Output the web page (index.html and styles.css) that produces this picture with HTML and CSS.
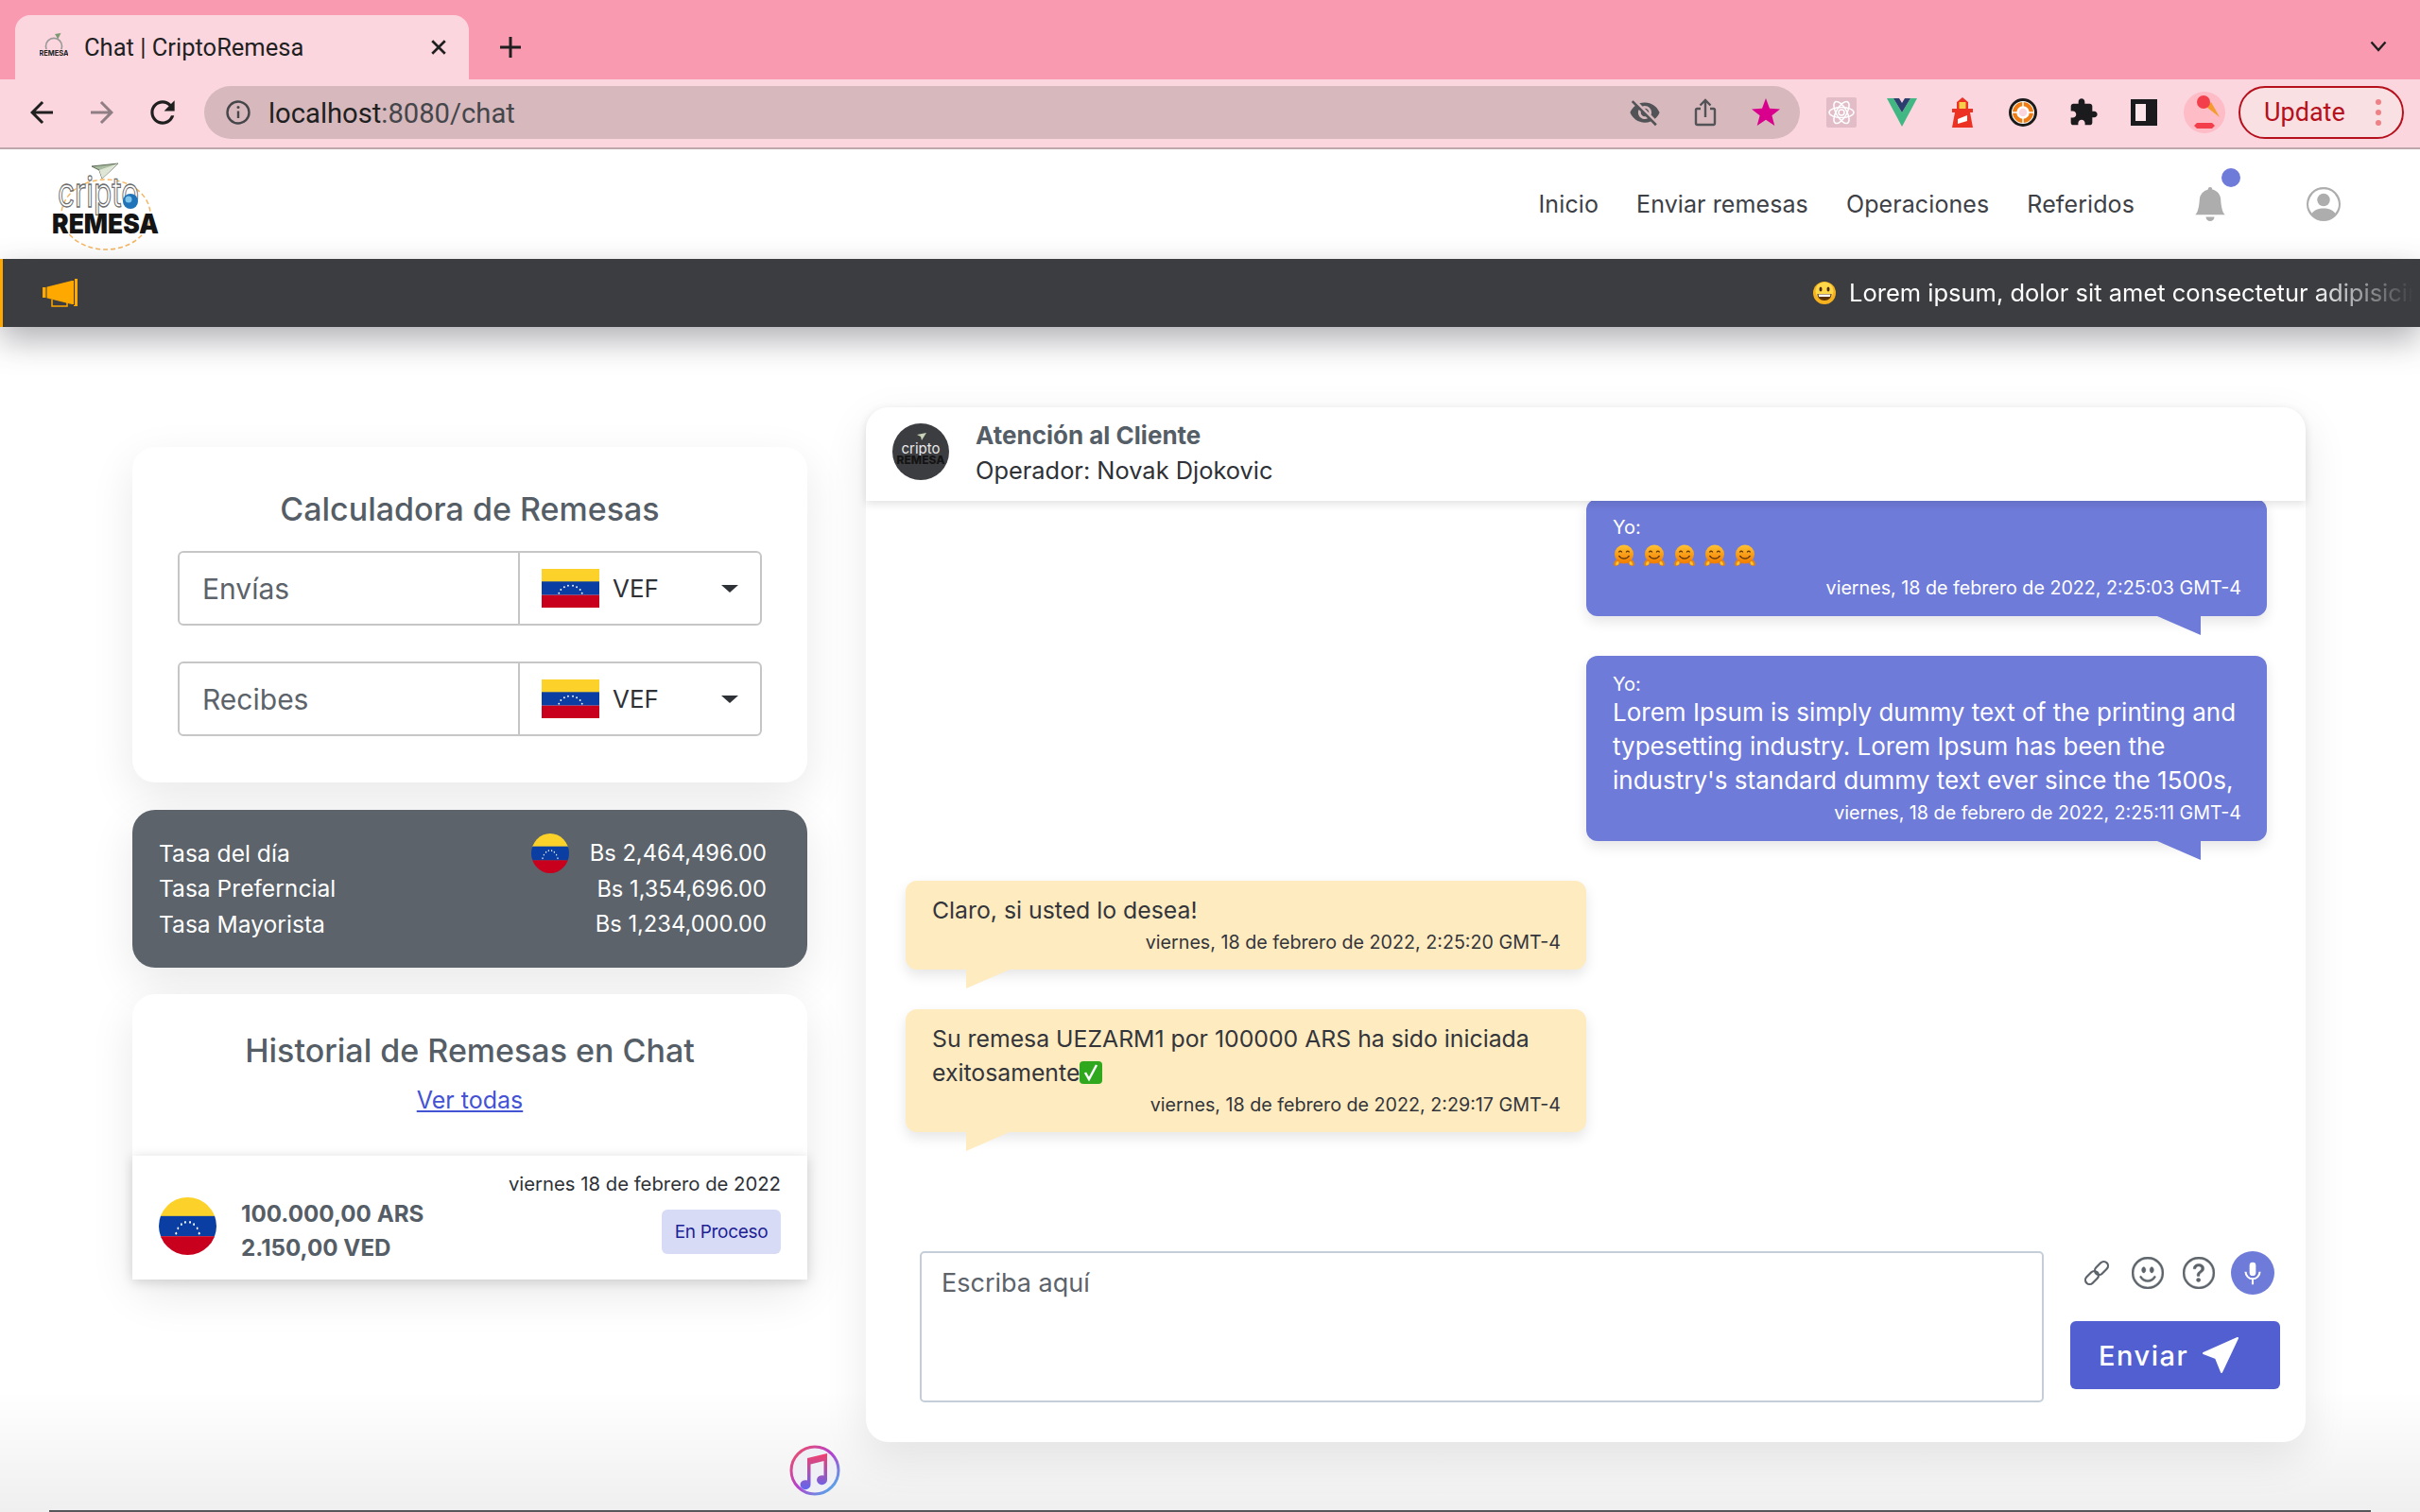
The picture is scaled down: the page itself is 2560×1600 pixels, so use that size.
FILE: index.html
```html
<!DOCTYPE html>
<html lang="es">
<head>
    <meta charset="UTF-8">
    <meta name="viewport" content="width=device-width, initial-scale=1.0">
    <title>Chat | CriptoRemesa</title>
    <link rel="stylesheet" href="styles.css">
</head>
<body>
    <!-- shared drawings -->
    <svg class="defs" width="0" height="0">
        <defs>
            <symbol id="flag-ve" viewBox="0 0 60 40" preserveAspectRatio="none">
                <rect width="60" height="14" fill="#fcd22a"/>
                <rect y="13" width="60" height="14" fill="#0a3ea3"/>
                <rect y="27" width="60" height="13" fill="#c8001e"/>
                <g fill="#fff">
                    <circle cx="18" cy="25" r=".9"/><circle cx="20" cy="21.5" r=".9"/><circle cx="23.5" cy="18.8" r=".9"/>
                    <circle cx="27.5" cy="17.3" r=".9"/><circle cx="32.5" cy="17.3" r=".9"/><circle cx="36.5" cy="18.8" r=".9"/>
                    <circle cx="40" cy="21.5" r=".9"/><circle cx="42" cy="25" r=".9"/>
                </g>
            </symbol>
            <linearGradient id="hug-face" x1="0" y1="0" x2="0" y2="1">
                <stop offset="0" stop-color="#ffc233"/>
                <stop offset="1" stop-color="#f27c00"/>
            </linearGradient>
            <symbol id="hug" viewBox="0 0 24 24">
                <circle cx="12" cy="10.500" r="10" fill="url(#hug-face)"/>
                <path d="M6.500 8.500c.5-1.800 2.700-1.800 3.200 0M14.300 8.500c.5-1.800 2.700-1.800 3.200 0" fill="none" stroke="#5c3208" stroke-width="1.300"/>
                <path d="M6.500 12c2.500 4.200 8.500 4.200 11 0" fill="none" stroke="#5c3208" stroke-width="1.400"/>
                <path d="M1 21c0-3 2.500-5 4.500-5s2.500 3 1.500 5-6 3-6 0zM23 21c0-3-2.500-5-4.500-5s-2.500 3-1.500 5 6 3 6 0z" fill="#e9820c"/>
                <path d="M3 21c0-1.500 1.200-3 2.500-3s1 2 .5 3-3 1.500-3 0zM21 21c0-1.500-1.200-3-2.500-3s-1 2-.5 3 3 1.500 3 0z" fill="#ffc233"/>
            </symbol>
        </defs>
    </svg>

    <!-- browser window top -->
    <div class="tabstrip">
        <div class="tab">
            <svg class="tab-icon" viewBox="0 0 28 28">
                <circle cx="14" cy="13" r="8" fill="none" stroke="#999" stroke-width="1.500"/>
                <path d="M15 1l6-1-3 6z" fill="#7c9a72"/>
                <rect x="1" y="16" width="26" height="7" fill="#fcd6df"/>
                <text class="tab-icon-text" x="14" y="22" text-anchor="middle">REMESA</text>
            </svg>
            <span class="tab-title">Chat | CriptoRemesa</span>
            <span class="tab-close">
                <svg viewBox="0 0 16 16" width="18" height="18"><path d="M2 2l12 12M14 2L2 14" stroke="#1f1f1f" stroke-width="2.400"/></svg>
            </span>
        </div>
        <svg class="tab-new" viewBox="0 0 24 24" width="24" height="24"><path d="M12 1v22M1 12h22" stroke="#1f1f1f" stroke-width="3"/></svg>
        <svg class="tab-list" viewBox="0 0 18 12" width="18" height="12"><path d="M1.500 1.500L9 10l7.500-8.500" fill="none" stroke="#1f1f1f" stroke-width="2.400"/></svg>
    </div>

    <div class="toolbar">
        <div class="tool"><svg viewBox="0 0 24 24" width="36" height="36"><path fill="#1f1f1f" d="M20 11H7.830l5.590-5.590L12 4l-8 8 8 8 1.410-1.410L7.830 13H20v-2z"/></svg></div>
        <div class="tool"><svg viewBox="0 0 24 24" width="36" height="36"><path fill="#8f7f85" d="M4 11h12.170l-5.590-5.590L12 4l8 8-8 8-1.410-1.410L16.170 13H4v-2z"/></svg></div>
        <div class="tool"><svg viewBox="0 0 24 24" width="38" height="38"><path fill="#1f1f1f" d="M17.650 6.350C16.200 4.900 14.210 4 12 4c-4.420 0-7.990 3.580-7.990 8s3.570 8 7.990 8c3.730 0 6.840-2.550 7.730-6h-2.080c-.82 2.330-3.040 4-5.650 4-3.310 0-6-2.690-6-6s2.690-6 6-6c1.660 0 3.140.69 4.220 1.780L13 11h7V4l-2.350 2.350z"/></svg></div>

        <div class="omnibox">
            <svg class="omni-info" viewBox="0 0 28 28" width="28" height="28">
                <circle cx="14" cy="14" r="11.500" fill="none" stroke="#45464a" stroke-width="2.400"/>
                <path d="M14 12.500v7.500" stroke="#45464a" stroke-width="2.400"/>
                <circle cx="14" cy="8.500" r="1.500" fill="#45464a"/>
            </svg>
            <span class="omni-url"><span class="omni-host">localhost</span>:8080/chat</span>
            <div class="omni-actions">
                <div class="tool"><svg viewBox="0 0 24 24" width="34" height="34"><path fill="#515356" d="M12 7c2.760 0 5 2.240 5 5 0 .65-.13 1.260-.36 1.830l2.920 2.920c1.510-1.260 2.700-2.890 3.430-4.750-1.730-4.390-6-7.500-11-7.500-1.400 0-2.740.25-3.980.7l2.160 2.160C10.740 7.130 11.350 7 12 7zM2 4.270l2.280 2.280.46.46C3.080 8.300 1.780 10.020 1 12c1.730 4.390 6 7.500 11 7.500 1.550 0 3.030-.3 4.380-.84l.42.42L19.730 22 21 20.730 3.270 3 2 4.270zM7.530 9.800l1.550 1.550c-.05.21-.08.43-.08.65 0 1.660 1.340 3 3 3 .22 0 .44-.03.65-.08l1.550 1.550c-.67.33-1.410.53-2.200.53-2.760 0-5-2.240-5-5 0-.79.2-1.530.53-2.200zm4.310-.78l3.150 3.150.02-.16c0-1.660-1.340-3-3-3l-.17.01z"/></svg></div>
                <div class="tool"><svg viewBox="0 0 24 30" width="24" height="30"><path d="M7 11H3.500A1.500 1.500 0 0 0 2 12.500v14A1.500 1.500 0 0 0 3.500 28h17a1.500 1.500 0 0 0 1.500-1.500v-14a1.500 1.500 0 0 0-1.500-1.500H17M12 20V2M6.500 7.500L12 2l5.500 5.500" fill="none" stroke="#515356" stroke-width="2.400"/></svg></div>
                <div class="tool tool-star"><svg viewBox="0 0 30 30" width="30" height="30"><path fill="#d8008c" d="M15 0l4 10.800 11 .6-8.600 6.900 2.900 10.700L15 22.800 5.700 29l2.900-10.700L0 11.400l11-.6z"/></svg></div>
            </div>
        </div>

        <div class="extensions">
            <div class="tool">
                <div class="ext-react">
                    <svg viewBox="0 0 32 32" width="32" height="32" fill="none" stroke="#fff" stroke-width="1.500">
                        <ellipse cx="16" cy="16" rx="13" ry="5.500"/>
                        <ellipse cx="16" cy="16" rx="13" ry="5.500" transform="rotate(60 16 16)"/>
                        <ellipse cx="16" cy="16" rx="13" ry="5.500" transform="rotate(120 16 16)"/>
                        <circle cx="16" cy="16" r="3"/>
                    </svg>
                </div>
            </div>
            <div class="tool"><svg viewBox="0 0 32 30" width="32" height="30"><path fill="#41b883" d="M0 0h7l9 15 9-15h7L16 30z"/><path fill="#2c3e6e" d="M7 0h6l3 5 3-5h6l-9 15z"/></svg></div>
            <div class="tool">
                <svg viewBox="0 0 22 32" width="22" height="32">
                    <path fill="#ec3323" d="M11 0l6 5v7H5V5zM0 12h22v4h-3l3 16H0l3-16H0z"/>
                    <rect x="7.500" y="5" width="7" height="7" fill="#f7d04a"/>
                    <path fill="#fff" d="M6 23l10-4v6l-10 3z"/>
                </svg>
            </div>
            <div class="tool">
                <svg viewBox="0 0 30 30" width="30" height="30">
                    <circle cx="15" cy="15" r="13.500" fill="#fff" stroke="#1a1a1a" stroke-width="3"/>
                    <circle cx="15" cy="15" r="11" fill="#ef7d14"/>
                    <circle cx="15" cy="15" r="5.500" fill="#fcd6df" stroke="#fff" stroke-width="2.500"/>
                    <path d="M15 4v6M15 20v6M4 15h6M20 15h6" stroke="#fff" stroke-width="1.500"/>
                </svg>
            </div>
            <div class="tool"><svg viewBox="0 0 24 24" width="32" height="32"><path fill="#1b1b1d" d="M20.500 11H19V7c0-1.100-.9-2-2-2h-4V3.500C13 2.120 11.880 1 10.500 1S8 2.120 8 3.500V5H4c-1.100 0-1.990.9-1.990 2v3.800H3.500c1.490 0 2.700 1.210 2.700 2.700s-1.210 2.700-2.700 2.700H2V20c0 1.100.9 2 2 2h3.800v-1.500c0-1.490 1.210-2.700 2.700-2.700 1.490 0 2.700 1.210 2.700 2.700V22H17c1.100 0 2-.9 2-2v-4h1.500c1.380 0 2.500-1.120 2.500-2.500S21.880 11 20.500 11z"/></svg></div>
            <div class="tool"><span class="ext-sidebar"></span></div>
            <div class="tool">
                <svg viewBox="0 0 44 44" width="44" height="44">
                    <circle cx="22" cy="22" r="22" fill="#fdbcc6"/>
                    <path d="M24 16l14 11-9-16z" fill="#f59b2e"/>
                    <circle cx="21" cy="11" r="7" fill="#f23f4b"/>
                    <path d="M14 33h16l3 3-3 3H14l-3-3z" fill="#f23f4b"/>
                </svg>
            </div>
        </div>

        <div class="update-btn">
            <span>Update</span>
            <span class="update-dots"><i></i><i></i><i></i></span>
        </div>
    </div>

    <!-- site navbar -->
    <header class="navbar">
        <svg class="logo" viewBox="0 0 160 110" width="160" height="110">
            <ellipse cx="82" cy="66" rx="47" ry="37" fill="none" stroke="#f5b560" stroke-width="1.500" stroke-dasharray="5 3"/>
            <path d="M67 15l28-3-17 16-3-9z" fill="#a9bb9f" stroke="#5d6b58" stroke-width="1"/>
            <path d="M75 19l20-7-17 16z" fill="#dfe6d6"/>
            <text class="logo-top" x="31" y="58" textLength="86" lengthAdjust="spacingAndGlyphs">cripto</text>
            <circle cx="108" cy="52" r="8" fill="#1f73b8"/>
            <circle cx="106" cy="50" r="3.500" fill="#7fc4ea"/>
            <text class="logo-bottom" x="25" y="86" textLength="113" lengthAdjust="spacingAndGlyphs">REMESA</text>
        </svg>
        <nav class="nav-links">
            <a class="nav-link">Inicio</a>
            <a class="nav-link">Enviar remesas</a>
            <a class="nav-link">Operaciones</a>
            <a class="nav-link">Referidos</a>
        </nav>
        <div class="nav-bell">
            <svg viewBox="0 0 16 16" width="36" height="36"><path fill="#adadad" d="M8 16a2 2 0 0 0 2-2H6a2 2 0 0 0 2 2zm.995-14.901a1 1 0 1 0-1.990 0A5.002 5.002 0 0 0 3 6c0 1.098-.5 6-2 7h14c-1.500-1-2-5.902-2-7 0-2.420-1.720-4.440-4.005-4.901z"/></svg>
            <span class="nav-dot"></span>
        </div>
        <svg class="nav-user" viewBox="0 0 16 16" width="36" height="36">
            <path fill="#adadad" d="M11 6a3 3 0 1 1-6 0 3 3 0 0 1 6 0z"/>
            <path fill="#adadad" d="M0 8a8 8 0 1 1 16 0A8 8 0 0 1 0 8zm8-7a7 7 0 0 0-5.468 11.370C3.242 11.226 4.805 10 8 10s4.757 1.225 5.468 2.370A7 7 0 0 0 8 1z"/>
        </svg>
    </header>

    <!-- announcement bar -->
    <div class="notice">
        <svg class="notice-icon" viewBox="0 0 38 30" width="38" height="30">
            <path fill="#ffa800" d="M0 9h3l28-7h2v-2h4v29h-4v-2h-2L3 20H0z"/>
            <path fill="none" stroke="#3c3d41" stroke-width="1" d="M4 8v13M33.500 0v28"/>
            <path fill="none" stroke="#ffa800" stroke-width="1.500" d="M10 22v7h16v-4"/>
        </svg>
        <div class="notice-text">
            <svg class="notice-emoji" viewBox="0 0 24 24" width="24" height="24">
                <circle cx="12" cy="12" r="12" fill="#f5b21e"/>
                <circle cx="12" cy="10" r="9.500" fill="#ffd84a"/>
                <ellipse cx="8" cy="8" rx="1.500" ry="2.500" fill="#4a2a05"/>
                <ellipse cx="16" cy="8" rx="1.500" ry="2.500" fill="#4a2a05"/>
                <path d="M4.500 13h15c0 4-3 7-7.500 7s-7.500-3-7.500-7z" fill="#5c3208"/>
                <path d="M5.500 13.500h13l-.6 2.500H6.100z" fill="#fff"/>
            </svg>
            <span class="notice-copy">Lorem ipsum, dolor sit amet consectetur adipisicing elit</span>
        </div>
    </div>

    <main class="page">
        <section class="left-col">
            <div class="card calc-card">
                <h2 class="card-title">Calculadora de Remesas</h2>
                <div class="field">
                    <span class="field-input">Envías</span>
                    <div class="field-select">
                        <svg class="flag-rect"><use href="#flag-ve"/></svg>
                        <span>VEF</span>
                        <i class="caret"></i>
                    </div>
                </div>
                <div class="field">
                    <span class="field-input">Recibes</span>
                    <div class="field-select">
                        <svg class="flag-rect"><use href="#flag-ve"/></svg>
                        <span>VEF</span>
                        <i class="caret"></i>
                    </div>
                </div>
            </div>

            <div class="card rates-card">
                <div class="rate-row">
                    <span>Tasa del día</span>
                    <span class="rate-value"><svg class="flag-small"><use href="#flag-ve"/></svg>Bs 2,464,496.00</span>
                </div>
                <div class="rate-row">
                    <span>Tasa Preferncial</span>
                    <span class="rate-value">Bs 1,354,696.00</span>
                </div>
                <div class="rate-row">
                    <span>Tasa Mayorista</span>
                    <span class="rate-value">Bs 1,234,000.00</span>
                </div>
            </div>

            <div class="card history-card">
                <div class="history-head">
                    <h2 class="card-title">Historial de Remesas en Chat</h2>
                    <a class="history-link">Ver todas</a>
                </div>
                <div class="history-item">
                    <svg class="flag-big"><use href="#flag-ve"/></svg>
                    <div class="history-amounts">
                        <div>100.000,00 ARS</div>
                        <div>2.150,00 VED</div>
                    </div>
                    <div class="history-meta">
                        <div class="history-date">viernes 18 de febrero de 2022</div>
                        <span class="badge">En Proceso</span>
                    </div>
                </div>
            </div>
        </section>

        <section class="card chat-card">
            <div class="chat-head">
                <svg class="chat-avatar" viewBox="0 0 60 60" width="60" height="60">
                    <circle cx="30" cy="30" r="30" fill="#3c3d41"/>
                    <path d="M26 12l10-2-5 8-1-4z" fill="#c9d3b8"/>
                    <text class="avatar-top" x="30" y="32" text-anchor="middle">cripto</text>
                    <text class="avatar-bottom" x="30" y="43" text-anchor="middle">REMESA</text>
                </svg>
                <div class="chat-names">
                    <div class="chat-title">Atención al Cliente</div>
                    <div class="chat-sub">Operador: Novak Djokovic</div>
                </div>
            </div>

            <div class="messages">
                <div class="bubble bubble-me">
                    <div class="bubble-who">Yo:</div>
                    <div class="emoji-row">
                        <svg class="hug"><use href="#hug"/></svg>
                        <svg class="hug"><use href="#hug"/></svg>
                        <svg class="hug"><use href="#hug"/></svg>
                        <svg class="hug"><use href="#hug"/></svg>
                        <svg class="hug"><use href="#hug"/></svg>
                    </div>
                    <div class="bubble-time">viernes, 18 de febrero de 2022, 2:25:03 GMT-4</div>
                </div>
                <div class="bubble bubble-me">
                    <div class="bubble-who">Yo:</div>
                    <div class="bubble-text">Lorem Ipsum is simply dummy text of the printing and typesetting industry. Lorem Ipsum has been the industry's standard dummy text ever since the 1500s,</div>
                    <div class="bubble-time">viernes, 18 de febrero de 2022, 2:25:11 GMT-4</div>
                </div>
                <div class="bubble bubble-them">
                    <div class="bubble-text">Claro, si usted lo desea!</div>
                    <div class="bubble-time">viernes, 18 de febrero de 2022, 2:25:20 GMT-4</div>
                </div>
                <div class="bubble bubble-them">
                    <div class="bubble-text">Su remesa UEZARM1 por 100000 ARS ha sido iniciada exitosamente<svg class="check" viewBox="0 0 24 24" width="24" height="24"><rect width="24" height="24" rx="4" fill="#2fa81e"/><path d="M6 12l4 7 8-15" fill="none" stroke="#fff" stroke-width="2.500"/></svg></div>
                    <div class="bubble-time">viernes, 18 de febrero de 2022, 2:29:17 GMT-4</div>
                </div>
            </div>

            <div class="composer">
                <div class="composer-input">Escriba aquí</div>
                <div class="composer-side">
                    <div class="composer-icons">
                        <svg viewBox="0 0 34 34" width="34" height="34" fill="none" stroke="#5c636a" stroke-width="2.200">
                            <rect x="4" y="17.500" width="16" height="9" rx="4.500" transform="rotate(-45 12 22)"/>
                            <rect x="14" y="7.500" width="16" height="9" rx="4.500" transform="rotate(-45 22 12)"/>
                        </svg>
                        <svg class="icon-thick" viewBox="0 0 16 16" width="34" height="34">
                            <path d="M8 15A7 7 0 1 1 8 1a7 7 0 0 1 0 14zm0 1A8 8 0 1 0 8 0a8 8 0 0 0 0 16z"/>
                            <path d="M4.285 9.567a.5.5 0 0 1 .683.183A3.498 3.498 0 0 0 8 11.500a3.498 3.498 0 0 0 3.032-1.750.5.5 0 1 1 .866.5A4.498 4.498 0 0 1 8 12.500a4.498 4.498 0 0 1-3.898-2.250.5.5 0 0 1 .183-.683zM7 6.500C7 7.328 6.552 8 6 8s-1-.672-1-1.500S5.448 5 6 5s1 .672 1 1.500zm4 0c0 .828-.448 1.500-1 1.500s-1-.672-1-1.500S9.448 5 10 5s1 .672 1 1.500z"/>
                        </svg>
                        <svg class="icon-thick" viewBox="0 0 16 16" width="34" height="34">
                            <path d="M8 15A7 7 0 1 1 8 1a7 7 0 0 1 0 14zm0 1A8 8 0 1 0 8 0a8 8 0 0 0 0 16z"/>
                            <path d="M5.255 5.786a.237.237 0 0 0 .241.247h.825c.138 0 .248-.113.266-.25.09-.656.54-1.134 1.342-1.134.686 0 1.314.343 1.314 1.168 0 .635-.374.927-.965 1.371-.673.489-1.206 1.060-1.168 1.987l.003.217a.25.25 0 0 0 .25.246h.811a.25.25 0 0 0 .25-.25v-.105c0-.718.273-.927 1.010-1.486.609-.463 1.244-.977 1.244-2.056 0-1.511-1.276-2.241-2.673-2.241-1.267 0-2.655.59-2.750 2.286zm1.557 5.763c0 .533.425.927 1.010.927.609 0 1.028-.394 1.028-.927 0-.552-.42-.94-1.029-.94-.584 0-1.009.388-1.009.94z"/>
                        </svg>
                        <span class="mic">
                            <svg viewBox="0 0 24 30" width="20" height="25" fill="none" stroke="#fff" stroke-width="2.500">
                                <rect x="8" y="1" width="8" height="17" rx="4" fill="#fff" stroke="none"/>
                                <path d="M3 13a9 9 0 0 0 18 0M12 22v7"/>
                            </svg>
                        </span>
                    </div>
                    <button class="send-btn">
                        <span>Enviar</span>
                        <svg viewBox="0 0 40 40" width="40" height="40"><path d="M38 2L2 18l13 5 6 15z" fill="#fff" stroke="#fff" stroke-width="2" stroke-linejoin="round"/></svg>
                    </button>
                </div>
            </div>
        </section>

        <svg class="music-icon" viewBox="0 0 54 54" width="54" height="54">
            <defs>
                <linearGradient id="ring" x1="0" y1="0" x2="1" y2="1">
                    <stop offset="0" stop-color="#f4525a"/>
                    <stop offset=".5" stop-color="#b43fd0"/>
                    <stop offset="1" stop-color="#3bc3f0"/>
                </linearGradient>
                <linearGradient id="note" x1="0" y1="0" x2="0" y2="1">
                    <stop offset="0" stop-color="#f43f6a"/>
                    <stop offset="1" stop-color="#5f66f2"/>
                </linearGradient>
            </defs>
            <circle cx="27" cy="27" r="25" fill="#eff0f6" stroke="url(#ring)" stroke-width="3"/>
            <path fill="url(#note)" d="M19 14l21-5v28a5.500 5 0 1 1-3.500-4.500V17l-14 3.500V42a5.500 5 0 1 1-3.500-4.500z"/>
        </svg>
    </main>

    <div class="window-edge"></div>
</body>
</html>
```
FILE: styles.css
```css
/* Basic reset */
* {
    box-sizing: border-box;
    margin: 0;
    padding: 0;
}

body {
    display: flex;
    flex-direction: column;
    height: 1600px;
    overflow: hidden;
    background: linear-gradient(to bottom, #ffffff 92%, #efefef 100%);
    font-family: Inter, "Liberation Sans", sans-serif;
    color: #2e3136;
}

.defs {
    position: absolute;
}

/* Browser tabs */
.tabstrip {
    display: flex;
    align-items: flex-end;
    height: 84px;
    padding-left: 16px;
    background-color: #f99ab1;
}

.tab {
    display: flex;
    align-items: center;
    width: 480px;
    height: 68px;
    padding: 0 23px 0 26px;
    border-radius: 16px 16px 0 0;
    background-color: #fcd6df;
}

.tab-icon {
    width: 30px;
    height: 30px;
    margin-right: 17px;
}

.tab-icon-text {
    font-size: 7px;
    font-weight: 700;
    fill: #222;
}

.tab-title {
    flex: 1;
    font-family: Roboto, sans-serif;
    font-size: 25.500px;
    color: #1f1f1f;
}

.tab-close {
    display: flex;
}

.tab-new {
    margin: 0 0 22px 32px;
}

.tab-list {
    margin: 0 35px 29px auto;
}

/* Browser toolbar */
.toolbar {
    display: flex;
    align-items: center;
    height: 74px;
    padding: 0 17px 2px 12px;
    border-bottom: 2px solid #bda6ac;
    background-color: #fcd6df;
}

.tool {
    display: flex;
    align-items: center;
    justify-content: center;
    width: 64px;
    height: 56px;
    flex-shrink: 0;
}

.omnibox {
    display: flex;
    align-items: center;
    width: 1688px;
    height: 56px;
    margin-left: 12px;
    padding-left: 22px;
    border-radius: 28px;
    background-color: #d6b8bd;
}

.omni-url {
    margin: 1px 0 0 18px;
    font-family: Roboto, sans-serif;
    font-size: 29.200px;
    color: #45464a;
}

.omni-host {
    color: #1f1f1f;
}

.omni-actions {
    display: flex;
    margin-left: auto;
}

.tool-star {
    width: 52px;
    margin: 0 10px 0 6px;
}

.extensions {
    display: flex;
    margin-left: 12px;
}

.ext-react {
    display: flex;
    width: 32px;
    height: 32px;
    border-radius: 2px;
    background-color: #e2bcc7;
}

.ext-sidebar {
    width: 28px;
    height: 28px;
    border: 5px solid #1b1b1d;
    border-right-width: 12px;
    background-color: #fce6ea;
}

.update-btn {
    display: flex;
    align-items: center;
    justify-content: space-between;
    width: 175px;
    height: 56px;
    margin-left: 4px;
    padding: 0 22px 0 25px;
    border: 2px solid #b5101c;
    border-radius: 28px;
    background-color: #f9e1e3;
    font-family: Roboto, sans-serif;
    font-size: 27px;
    color: #b5101c;
}

.update-dots {
    display: flex;
    flex-direction: column;
    gap: 5px;
}

.update-dots i {
    display: block;
    width: 6px;
    height: 6px;
    border-radius: 50%;
    background-color: #ee8086;
}

/* Site navbar */
.navbar {
    display: flex;
    align-items: center;
    height: 116px;
    padding: 0 84px 0 30px;
    background-color: #ffffff;
}

.logo {
    display: block;
}

.logo-top {
    font-size: 44px;
    fill: #ffffff;
    stroke: #6b6b6b;
    stroke-width: 1.300;
}

.logo-bottom {
    font-size: 29px;
    font-weight: 900;
    fill: #141414;
}

.nav-links {
    display: flex;
    gap: 40px;
    margin-left: auto;
}

.nav-link {
    font-size: 25px;
    letter-spacing: 0.100px;
    color: #3d4146;
}

.nav-bell {
    position: relative;
    display: flex;
    margin-left: 62px;
}

.nav-dot {
    position: absolute;
    top: -20px;
    left: 30px;
    width: 20px;
    height: 20px;
    border-radius: 50%;
    background-color: #6f7bd9;
}

.nav-user {
    margin-left: 84px;
}

/* Announcement bar */
.notice {
    position: relative;
    z-index: 2;
    display: flex;
    align-items: center;
    justify-content: space-between;
    height: 72px;
    padding-left: 42px;
    border-left: 3px solid #ffa800;
    background-color: #3c3d41;
    box-shadow: 0 14px 34px rgba(60, 60, 70, 0.4);
}

.notice-text {
    display: flex;
    align-items: center;
    gap: 14px;
    width: 642px;
    overflow: hidden;
    white-space: nowrap;
    font-size: 25.500px;
    color: #ffffff;
    -webkit-mask-image: linear-gradient(to right, #000 82%, transparent 99%);
    mask-image: linear-gradient(to right, #000 82%, transparent 99%);
}

.notice-emoji {
    flex-shrink: 0;
}

.notice-copy {
    margin-top: -2px;
}

/* Page layout */
.page {
    position: relative;
    display: flex;
    flex: 1;
    min-height: 0;
    padding: 85px 0 72px 140px;
}

.card {
    background-color: #ffffff;
    border-radius: 24px;
    box-shadow: 0 16px 48px rgba(0, 0, 0, 0.09);
}

.card-title {
    font-size: 34px;
    font-weight: 500;
    line-height: 40px;
    text-align: center;
    color: #555e66;
}

.left-col {
    display: flex;
    flex-direction: column;
    width: 714px;
    padding-top: 42px;
}

/* Calculator */
.calc-card {
    height: 355px;
    padding: 46px 48px 0;
}

.field {
    display: flex;
    height: 79px;
    margin-top: 38px;
    border: 2px solid #c6c6c6;
    border-radius: 6px;
}

.calc-card .card-title + .field {
    margin-top: 24px;
}

.field-input {
    display: flex;
    align-items: center;
    width: 360px;
    padding-left: 24px;
    border-right: 2px solid #c6c6c6;
    font-size: 30px;
    color: #5c636a;
}

.field-select {
    display: flex;
    flex: 1;
    align-items: center;
    padding: 0 23px 0 23px;
    font-size: 26px;
    color: #2e3136;
}

.flag-rect {
    width: 61px;
    height: 41px;
    margin-right: 14px;
}

.caret {
    margin-left: auto;
    border-top: 8px solid #2e3136;
    border-left: 9px solid transparent;
    border-right: 9px solid transparent;
}

/* Rates */
.rates-card {
    height: 167px;
    margin-top: 29px;
    padding: 27px 43px 0 28px;
    background-color: #5c636a;
    font-size: 24.600px;
    color: #ffffff;
}

.rate-row {
    display: flex;
    align-items: center;
    justify-content: space-between;
    height: 37.500px;
}

.rate-value {
    display: flex;
    align-items: center;
    font-size: 23.700px;
}

.flag-small {
    width: 40px;
    height: 42px;
    margin-right: 22px;
    border-radius: 50%;
}

/* History */
.history-card {
    height: 302px;
    margin-top: 28px;
}

.history-head {
    display: flex;
    flex-direction: column;
    align-items: center;
    height: 171px;
    padding-top: 40px;
}

.history-link {
    margin-top: 17px;
    font-size: 25px;
    color: #4353d3;
    text-decoration: underline;
}

.history-item {
    display: flex;
    align-items: center;
    height: 131px;
    padding: 0 28px;
    background-color: #ffffff;
    box-shadow: 0 2px 12px rgba(0, 0, 0, 0.16);
}

.flag-big {
    width: 61px;
    height: 61px;
    margin: 18px 26px 0 0;
    border-radius: 50%;
}

.history-amounts {
    margin-top: 29px;
    font-size: 24.200px;
    font-weight: 700;
    line-height: 36px;
    color: #555e66;
}

.history-meta {
    display: flex;
    flex-direction: column;
    align-items: flex-end;
    margin: 0 0 10px auto;
}

.history-date {
    font-size: 20.300px;
    color: #2e3136;
}

.badge {
    display: flex;
    align-items: center;
    justify-content: center;
    width: 126px;
    height: 47px;
    margin-top: 15px;
    border-radius: 6px;
    background-color: #d8dbf5;
    font-size: 19px;
    letter-spacing: -0.300px;
    color: #1c2296;
}

/* Chat */
.chat-card {
    display: flex;
    flex-direction: column;
    width: 1523px;
    height: 1095px;
    margin-left: 62px;
}

.chat-head {
    position: relative;
    z-index: 1;
    display: flex;
    align-items: center;
    gap: 28px;
    height: 99px;
    padding: 0 28px;
    border-radius: 24px 24px 0 0;
    background-color: #ffffff;
    box-shadow: 0 3px 10px rgba(0, 0, 0, 0.12);
}

.chat-avatar {
    margin-top: -6px;
}

.avatar-top {
    font-size: 15px;
    fill: #e8e8e8;
}

.avatar-bottom {
    font-size: 12px;
    font-weight: 800;
    fill: #141414;
}

.chat-names {
    margin-top: -3px;
}

.chat-title {
    font-size: 26px;
    font-weight: 700;
    line-height: 37px;
    color: #555e66;
}

.chat-sub {
    font-size: 25.400px;
    line-height: 37px;
    color: #2e3136;
}

.messages {
    display: flex;
    flex: 1;
    flex-direction: column;
    gap: 42px;
    margin-top: -2px;
    padding: 0 41px 0 42px;
}

.bubble {
    position: relative;
    width: 720px;
    padding: 18px 27px 14px 28px;
    border-radius: 12px;
    box-shadow: 0 6px 14px rgba(0, 0, 0, 0.1);
}

.bubble::after {
    content: "";
    position: absolute;
    top: 100%;
    width: 46px;
    height: 20px;
}

.bubble-me {
    align-self: flex-end;
    background-color: #6f7bd9;
    color: #ffffff;
}

.bubble-me::after {
    right: 70px;
    background-color: #6f7bd9;
    clip-path: polygon(0 0, 100% 0, 100% 100%);
}

.bubble-them {
    align-self: flex-start;
    padding-top: 13px;
    padding-bottom: 13px;
    background-color: #feebc0;
    color: #33353a;
}

.bubble-them::after {
    left: 64px;
    background-color: #feebc0;
    clip-path: polygon(0 0, 100% 0, 0 100%);
}

.bubble-who {
    font-size: 20px;
    line-height: 24px;
}

.emoji-row {
    display: flex;
    align-items: center;
    gap: 8px;
    height: 36px;
}

.hug {
    width: 24px;
    height: 24px;
}

.bubble-text {
    font-size: 26px;
    line-height: 36px;
}

.bubble-them .bubble-text {
    font-size: 24.800px;
}

.check {
    vertical-align: -3px;
}

.bubble-time {
    font-size: 19.700px;
    line-height: 32px;
    text-align: right;
}

/* Message box */
.composer {
    display: flex;
    gap: 28px;
    padding: 0 27px 42px 57px;
}

.composer-input {
    width: 1189px;
    height: 160px;
    padding: 15px 21px;
    border: 2px solid #c5ced8;
    border-radius: 5px;
    font-size: 27px;
    color: #5c636a;
}

.composer-side {
    display: flex;
    flex-direction: column;
    width: 222px;
}

.composer-icons {
    display: flex;
    align-items: center;
    justify-content: flex-end;
    gap: 20px;
    height: 46px;
    padding-right: 6px;
}

.icon-thick {
    fill: #5c636a;
    stroke: #5c636a;
    stroke-width: 0.200;
}

.mic {
    display: flex;
    align-items: center;
    justify-content: center;
    width: 46px;
    height: 46px;
    margin-left: -3px;
    border-radius: 50%;
    background-color: #6f7bd9;
}

.send-btn {
    display: flex;
    align-items: center;
    gap: 14px;
    height: 72px;
    margin-top: 28px;
    padding-left: 30px;
    border: none;
    border-radius: 6px;
    background-color: #525fd0;
    font-family: inherit;
    font-size: 29px;
    font-weight: 500;
    letter-spacing: 1.500px;
    color: #ffffff;
}

.music-icon {
    position: absolute;
    left: 835px;
    bottom: 15px;
}

.window-edge {
    height: 2px;
    margin: 0 52px;
    background-color: #55575a;
}
```
